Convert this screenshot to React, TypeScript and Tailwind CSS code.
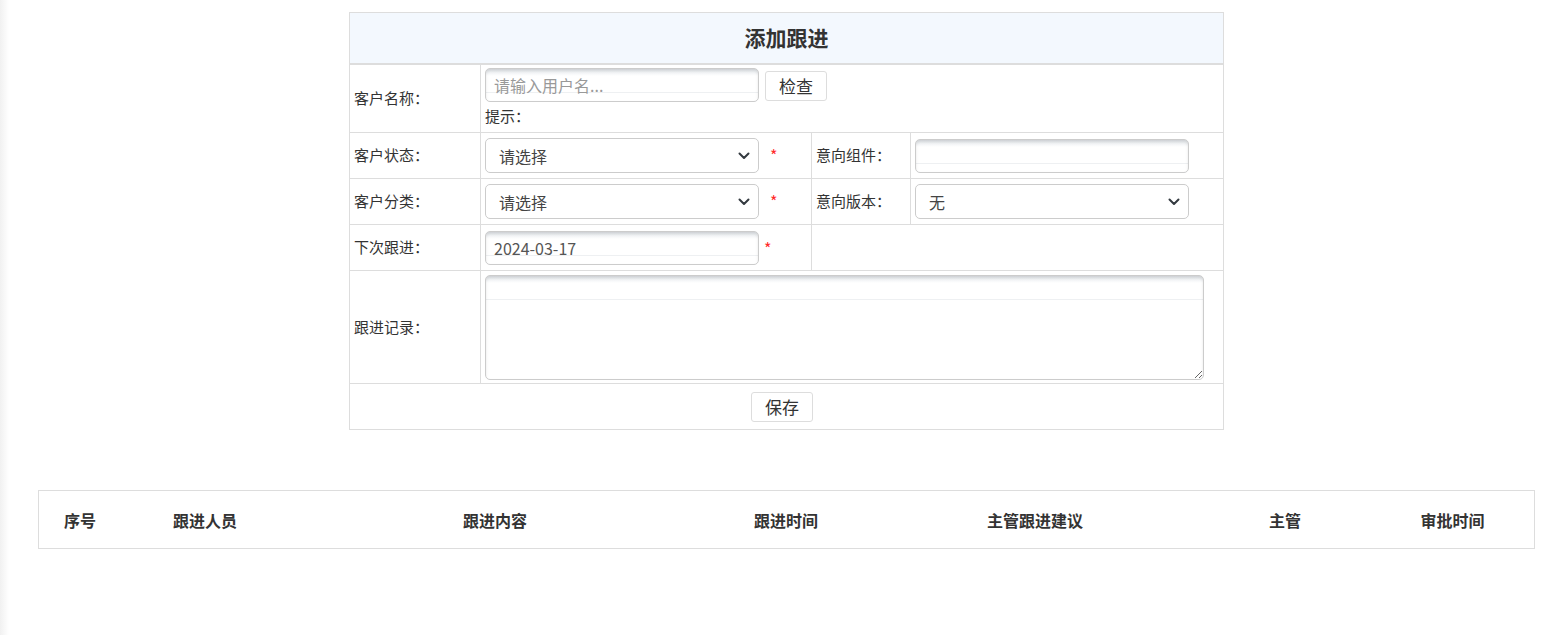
import type { ReactNode } from "react";

const font = { fontFamily: '"Microsoft YaHei", "Noto Sans CJK SC", "Noto Sans", sans-serif' };

const inputCls =
  "h-[34px] w-[274px] rounded-[5px] border border-[#ccc] px-2 text-[16px] text-[#555] outline-none shadow-[inset_0_2px_3px_rgba(0,0,0,0.10)] bg-[linear-gradient(to_bottom,#e4e8ec_0px,#fff_7px,#fff_23px,#eef0f2_23px,#eef0f2_24px,#fff_24px)] placeholder:text-[#999]";

function Chevron() {
  return (
    <svg
      className="pointer-events-none absolute right-[9px] top-1/2 -translate-y-1/2"
      width="12"
      height="8"
      viewBox="0 0 12 8"
      fill="none"
    >
      <path d="M1.5 1.5 6 6l4.5-4.5" stroke="#343a40" strokeWidth="2" strokeLinecap="round" strokeLinejoin="round" />
    </svg>
  );
}

function Select({ value, width = "w-[274px]" }: { value: string; width?: string }) {
  return (
    <div className={`relative ${width}`}>
      <select
        defaultValue={value}
        className="h-[35px] w-full appearance-none rounded-[5px] border border-[#ccc] bg-white pl-[13px] pr-8 text-[16px] text-[#444] outline-none"
      >
        <option>{value}</option>
      </select>
      <Chevron />
    </div>
  );
}

const Star = () => <span className="mt-[9px] text-[16px] leading-none text-[#ff2a2a]">*</span>;

function Label({ children }: { children: ReactNode }) {
  return <td className="border border-[#ddd] pl-[4px] text-[15px] text-[#333]">{children}</td>;
}

const heads = [
  { t: "序号", w: "w-[82px]" },
  { t: "跟进人员", w: "w-[168px]" },
  { t: "跟进内容", w: "w-[412px]" },
  { t: "跟进时间", w: "w-[170px]" },
  { t: "主管跟进建议", w: "w-[328px]" },
  { t: "主管", w: "w-[172px]" },
  { t: "审批时间", w: "flex-1" },
];

export default function App() {
  return (
    <div
      className="min-h-screen bg-[linear-gradient(to_right,#f1f1f1,#fff_9px)] pt-3 text-[#333]"
      style={font}
    >
      <table className="ml-[349px] w-[875px] border-collapse">
        <tbody>
          <tr className="h-[51px]">
            <td colSpan={4} className="border border-b-2 border-[#ddd] bg-[#f3f8fe] text-center text-[21px] font-bold text-[#333]">
              添加跟进
            </td>
          </tr>
          <tr className="h-[69px]">
            <Label>客户名称：</Label>
            <td colSpan={3} className="border border-[#ddd] px-[4px] align-top">
              <div className="flex items-start gap-[6px] pt-[3px]">
                <input className={inputCls} placeholder="请输入用户名..." />
                <button className="mt-[3px] h-[30px] w-[62px] rounded-[3px] border border-[#ddd] bg-white text-[17px] text-[#333]">
                  检查
                </button>
              </div>
              <div className="mt-[3px] text-[15px] leading-[22px]">提示：</div>
            </td>
          </tr>
          <tr className="h-[46px]">
            <Label>客户状态：</Label>
            <td className="w-[331px] border border-[#ddd] px-[4px]">
              <div className="flex items-start gap-[11px]">
                <Select value="请选择" />
                <Star />
              </div>
            </td>
            <Label>意向组件：</Label>
            <td className="w-[313px] border border-[#ddd] px-[4px]">
              <input className={`${inputCls} h-[33px]`} />
            </td>
          </tr>
          <tr className="h-[46px]">
            <Label>客户分类：</Label>
            <td className="border border-[#ddd] px-[4px]">
              <div className="flex items-start gap-[11px]">
                <Select value="请选择" />
                <Star />
              </div>
            </td>
            <Label>意向版本：</Label>
            <td className="border border-[#ddd] px-[4px]">
              <Select value="无" />
            </td>
          </tr>
          <tr className="h-[46px]">
            <Label>下次跟进：</Label>
            <td className="border border-[#ddd] px-[4px]">
              <div className="flex items-start gap-[5px]">
                <input className={inputCls} defaultValue="2024-03-17" />
                <Star />
              </div>
            </td>
            <td colSpan={2} className="border border-[#ddd]" />
          </tr>
          <tr className="h-[113px]">
            <td className="w-[131px] border border-[#ddd] pl-[4px] text-[15px] text-[#333]">跟进记录：</td>
            <td colSpan={3} className="border border-[#ddd] px-[4px]">
              <textarea className={`${inputCls} block h-[105px] w-[719px] resize`} />
            </td>
          </tr>
          <tr className="h-[46px]">
            <td colSpan={4} className="border border-[#ddd] text-center">
              <button className="mr-[9px] h-[30px] w-[62px] rounded-[3px] border border-[#ddd] bg-white text-[17px] text-[#333]">
                保存
              </button>
            </td>
          </tr>
        </tbody>
      </table>

      <div className="ml-[38px] mt-[60px] flex h-[59px] w-[1497px] items-center border border-[#ddd] bg-white">
        {heads.map((h) => (
          <div key={h.t} className={`${h.w} text-center text-[16px] font-bold text-[#333]`}>
            {h.t}
          </div>
        ))}
      </div>
    </div>
  );
}
